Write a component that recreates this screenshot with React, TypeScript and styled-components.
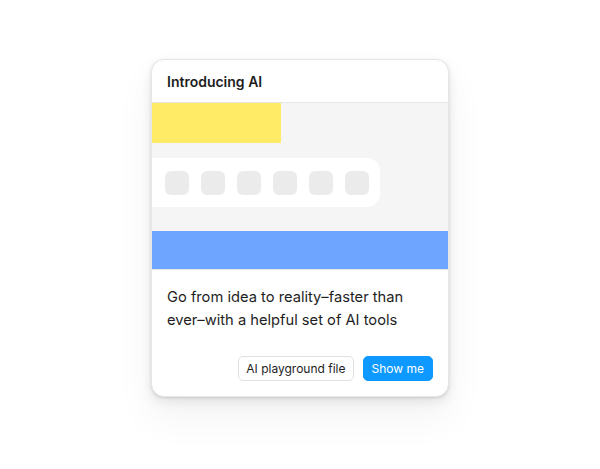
import styled, { createGlobalStyle } from 'styled-components';

const GlobalStyle = createGlobalStyle`
  html, body {
    margin: 0;
    padding: 0;
    background: #ffffff;
  }
  body {
    font-family: Inter, "Noto Sans", sans-serif;
    -webkit-font-smoothing: antialiased;
  }
`;

const Page = styled.div`
  width: 600px;
  height: 469px;
  display: flex;
  justify-content: center;
  align-items: flex-start;
  padding-top: 59px;
  box-sizing: border-box;
`;

const Card = styled.div`
  width: 298px;
  background: #ffffff;
  border: 1px solid #e6e6e6;
  border-radius: 13px;
  overflow: hidden;
  box-sizing: border-box;
  box-shadow:
    0 1px 3px rgba(0, 0, 0, 0.12),
    0 5px 12px rgba(0, 0, 0, 0.08),
    0 20px 40px rgba(0, 0, 0, 0.05);
`;

const Header = styled.div`
  height: 42px;
  display: flex;
  align-items: center;
  padding: 0 15px;
  border-bottom: 1px solid #e6e6e6;
  font-size: 14px;
  font-weight: 600;
  color: #1e1e1e;
`;

const Illustration = styled.div`
  background: #f5f5f5;
  display: flex;
  flex-direction: column;
  align-items: flex-start;
  border-bottom: 1px solid #e6e6e6;
`;

const YellowBlock = styled.div`
  width: 129px;
  height: 40px;
  background: #ffeb66;
`;

const Toolbar = styled.div`
  margin-top: 15px;
  width: 228px;
  height: 49px;
  background: #ffffff;
  border-radius: 0 13px 13px 0;
  display: flex;
  align-items: center;
  gap: 12px;
  padding-left: 13px;
  box-sizing: border-box;
`;

const Tool = styled.div`
  width: 24px;
  height: 24px;
  border-radius: 6px;
  background: #ebebeb;
`;

const BlueBar = styled.div`
  margin-top: 24px;
  width: 100%;
  height: 38px;
  background: #6ea6ff;
`;

const Body = styled.div`
  padding: 16px 15px 15px 15px;
  display: flex;
  flex-direction: column;
`;

const Description = styled.p`
  margin: 0;
  font-size: 14.7px;
  line-height: 23px;
  color: #1e1e1e;
`;

const Actions = styled.div`
  margin-top: 24px;
  display: flex;
  justify-content: flex-end;
  gap: 9px;
`;

const Button = styled.button<{ $primary?: boolean }>`
  height: 25px;
  padding: 0 ${(p) => (p.$primary ? '8px' : '7px')};
  border-radius: 5px;
  font-family: Inter, "Noto Sans", sans-serif;
  font-size: 12px;
  line-height: 23px;
  cursor: pointer;
  border: 1px solid ${(p) => (p.$primary ? '#0d99ff' : '#e0e0e0')};
  background: ${(p) => (p.$primary ? '#0d99ff' : '#ffffff')};
  color: ${(p) => (p.$primary ? '#ffffff' : '#1e1e1e')};
`;

export default function App() {
  return (
    <>
      <GlobalStyle />
      <Page>
        <Card>
          <Header>Introducing AI</Header>
          <Illustration>
            <YellowBlock />
            <Toolbar>
              {[0, 1, 2, 3, 4, 5].map((i) => (
                <Tool key={i} />
              ))}
            </Toolbar>
            <BlueBar />
          </Illustration>
          <Body>
            <Description>
              Go from idea to reality–faster than ever–with a helpful set of AI tools
            </Description>
            <Actions>
              <Button>AI playground file</Button>
              <Button $primary>Show me</Button>
            </Actions>
          </Body>
        </Card>
      </Page>
    </>
  );
}
